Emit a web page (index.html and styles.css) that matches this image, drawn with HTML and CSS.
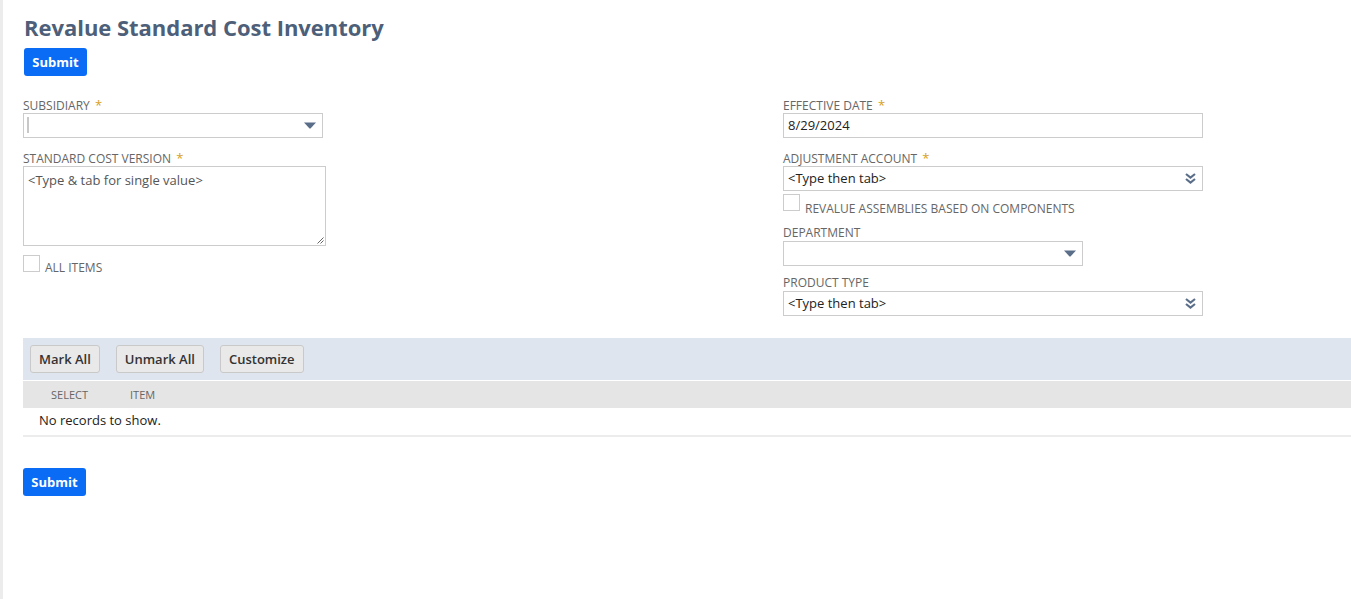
FILE: index.html
```html
<!DOCTYPE html>
<html>
<head>
<meta charset="utf-8">
<link rel="stylesheet" href="styles.css">
</head>
<body>
<div class="page">
  <h1 class="title">Revalue Standard Cost Inventory</h1>
  <button class="btn-primary top">Submit</button>

  <div class="form">
    <div class="col left">
      <div class="field">
        <label class="lbl">SUBSIDIARY <span class="req">*</span></label>
        <div class="select w300"><span class="caret"></span>
          <svg class="tri" width="12" height="7" viewBox="0 0 12 7"><path d="M0 0.5 H12 L6.5 6.5 H5.5 Z" fill="#5b6e89"/></svg>
        </div>
      </div>
      <div class="field">
        <label class="lbl">STANDARD COST VERSION <span class="req">*</span></label>
        <div class="textarea"><span class="ph">&lt;Type &amp; tab for single value&gt;</span>
          <svg class="grip" width="7" height="7" viewBox="0 0 7 7"><path d="M6.5 0.5 L0.5 6.5 M6.5 3.5 L3.5 6.5" stroke="#666" stroke-width="1"/></svg>
        </div>
      </div>
      <div class="check"><span class="box"></span><span class="clbl">ALL ITEMS</span></div>
    </div>
    <div class="col right">
      <div class="field">
        <label class="lbl">EFFECTIVE DATE <span class="req">*</span></label>
        <div class="input w420"><span class="val">8/29/2024</span></div>
      </div>
      <div class="field">
        <label class="lbl">ADJUSTMENT ACCOUNT <span class="req">*</span></label>
        <div class="input w420"><span class="val">&lt;Type then tab&gt;</span>
          <svg class="dbl" width="11" height="11" viewBox="0 0 11 11"><path d="M1 1 L5.5 4.5 L10 1 M1 6 L5.5 9.5 L10 6" fill="none" stroke="#5b6e89" stroke-width="2.2"/></svg>
        </div>
      </div>
      <div class="check tight"><span class="box"></span><span class="clbl">REVALUE ASSEMBLIES BASED ON COMPONENTS</span></div>
      <div class="field short">
        <label class="lbl">DEPARTMENT</label>
        <div class="select w300">
          <svg class="tri" width="12" height="7" viewBox="0 0 12 7"><path d="M0 0.5 H12 L6.5 6.5 H5.5 Z" fill="#5b6e89"/></svg>
        </div>
      </div>
      <div class="field">
        <label class="lbl">PRODUCT TYPE</label>
        <div class="input w420"><span class="val">&lt;Type then tab&gt;</span>
          <svg class="dbl" width="11" height="11" viewBox="0 0 11 11"><path d="M1 1 L5.5 4.5 L10 1 M1 6 L5.5 9.5 L10 6" fill="none" stroke="#5b6e89" stroke-width="2.2"/></svg>
        </div>
      </div>
    </div>
  </div>

  <div class="sublist">
    <div class="toolbar">
      <button class="btn-sec">Mark All</button>
      <button class="btn-sec">Unmark All</button>
      <button class="btn-sec">Customize</button>
    </div>
    <div class="thead"><span class="th sel">SELECT</span><span class="th">ITEM</span></div>
    <div class="row">No records to show.</div>
  </div>

  <button class="btn-primary bottom">Submit</button>
</div>
</body>
</html>
```
FILE: styles.css
```css
html, body {
  margin: 0;
  padding: 0;
  background: #fff;
}
body {
  font-family: "Open Sans", "Liberation Sans", sans-serif;
  color: #333;
  height: 599px;
  overflow: hidden;
}
.page {
  border-left: 3px solid #ececec;
  height: 599px;
  box-sizing: border-box;
  padding-left: 20px;
  padding-top: 13px;
}
.title {
  margin: 0 0 0 1px;
  font-size: 22px;
  font-weight: 700;
  color: #4d5f79;
  line-height: 28px;
  height: 35px;
  letter-spacing: -0.03px;
}
.btn-primary {
  display: block;
  background: #0a6cf5;
  color: #fff;
  border: none;
  border-radius: 3px;
  font-family: "Open Sans", sans-serif;
  font-weight: 700;
  font-size: 13px;
  padding: 0;
  width: 63px;
  height: 28px;
  line-height: 28px;
  text-align: center;
}
.btn-primary.top { margin-left: 1px; }
.btn-primary.bottom { margin-top: 31px; }
.form {
  display: grid;
  grid-template-columns: 760px 1fr;
  margin-top: 21px;
}
.field { display: flex; flex-direction: column; margin-bottom: 12px; }
.field.short { margin-bottom: 9px; }
.lbl {
  font-size: 12px;
  color: #666;
  line-height: 16px;
  height: 17px;
  margin-bottom: -1px;
}
.req { color: #d79f1c; font-size: 13px; margin-left: 2px; }
.select, .input {
  position: relative;
  box-sizing: border-box;
  height: 25px;
  border: 1px solid #ccc;
  background: #fff;
}
.w300 { width: 300px; }
.w420 { width: 420px; }
.caret {
  position: absolute;
  left: 3px;
  top: 3px;
  width: 2px;
  height: 16px;
  background: #c8c8c8;
}
.tri { position: absolute; right: 6px; top: 8px; }
.dbl { position: absolute; right: 6px; top: 6px; }
.val {
  display: block;
  font-size: 13px;
  color: #222;
  line-height: 23px;
  padding-left: 4px;
}
.textarea {
  position: relative;
  box-sizing: border-box;
  width: 303px;
  height: 80px;
  border: 1px solid #ccc;
}
.ph {
  display: block;
  font-size: 13px;
  color: #555;
  padding: 5px 0 0 4px;
  line-height: 16px;
}
.grip { position: absolute; right: 1px; bottom: 1px; }
.check {
  display: flex;
  align-items: flex-end;
  margin-top: -3px;
}
.check.tight { margin-top: -9px; margin-bottom: 14px; }
.check.tight .clbl { margin-bottom: -5px; }
.box {
  width: 15px;
  height: 15px;
  border: 1px solid #ccc;
  background: #fff;
  flex: none;
}
.clbl {
  font-size: 12px;
  color: #666;
  margin-left: 5px;
  line-height: 14px;
  margin-bottom: -3px;
}
.sublist {
  margin-top: 10px;
  border-bottom: 2px solid #ececec;
}
.toolbar {
  background: #dfe5ee;
  height: 43px;
  box-sizing: border-box;
  padding: 7px 0 0 7px;
  display: flex;
  align-items: flex-start;
  gap: 16px;
  border-bottom: 1px solid #fff;
}
.btn-sec {
  height: 28px;
  box-sizing: border-box;
  background: #e9e9e9;
  border: 1px solid #c9c9c9;
  border-radius: 3px;
  font-family: "Open Sans", sans-serif;
  font-weight: 600;
  font-size: 13px;
  color: #333;
  padding: 0 8px;
}
.thead {
  background: #e5e5e5;
  height: 27px;
  display: flex;
  align-items: center;
  padding-left: 28px;
}
.th {
  font-size: 11px;
  color: #666;
  margin-right: 42px;
}
.row {
  height: 27px;
  line-height: 24px;
  font-size: 13px;
  color: #222;
  padding-left: 16px;
}
```
